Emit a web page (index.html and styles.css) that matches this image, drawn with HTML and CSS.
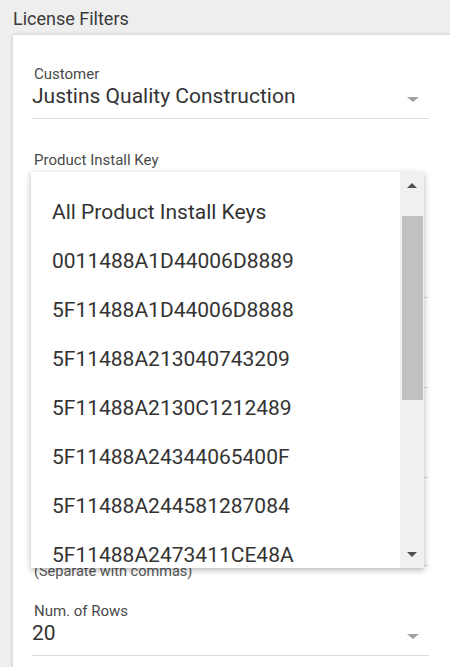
FILE: index.html
```html
<!DOCTYPE html>
<html>
<head>
<meta charset="utf-8">
<link rel="stylesheet" href="styles.css">
</head>
<body>
<div class="title">License Filters</div>
<div class="card">
  <div class="field first">
    <div class="label">Customer</div>
    <div class="value-row">
      <span class="value">Justins Quality Construction</span>
      <span class="caret"></span>
    </div>
  </div>

  <div class="field product">
    <div class="label">Product Install Key</div>
    <div class="value-row tall"></div>
  </div>

  <div class="field hidden-field">
    <div class="label"></div>
    <div class="value-row"><span class="value"></span></div>
  </div>

  <div class="field hidden-field">
    <div class="label"></div>
    <div class="value-row"><span class="value"></span></div>
  </div>

  <div class="field hidden-field last-hidden">
    <div class="label"></div>
    <div class="value-row"><span class="value"></span></div>
  </div>
  <div class="helper">(Separate with commas)</div>

  <div class="field rows">
    <div class="label">Num. of Rows</div>
    <div class="value-row">
      <span class="value">20</span>
      <span class="caret"></span>
    </div>
  </div>

  <div class="dropdown">
    <ul class="options">
      <li>All Product Install Keys</li>
      <li>0011488A1D44006D8889</li>
      <li>5F11488A1D44006D8888</li>
      <li>5F11488A213040743209</li>
      <li>5F11488A2130C1212489</li>
      <li>5F11488A24344065400F</li>
      <li>5F11488A244581287084</li>
      <li>5F11488A2473411CE48A</li>
    </ul>
    <div class="scrollbar">
      <div class="sb-btn up"><span class="tri-up"></span></div>
      <div class="sb-track"><div class="sb-thumb"></div></div>
      <div class="sb-btn down"><span class="tri-down"></span></div>
    </div>
  </div>
</div>
</body>
</html>
```

FILE: styles.css
```css
html, body {
  margin: 0;
  padding: 0;
  height: 100%;
  overflow: hidden;
}
body {
  background: #eeeeee;
  font-family: Roboto, "Liberation Sans", sans-serif;
  color: #333333;
}
.title {
  height: 35px;
  box-sizing: border-box;
  padding: 9px 0 0 13px;
  font-size: 18px;
  line-height: 20px;
  color: #3a3a3a;
}
.card {
  position: relative;
  margin-left: 13px;
  margin-right: -20px;
  background: #ffffff;
  box-shadow: 0 0 4px rgba(0,0,0,0.18);
  padding: 31px 41px 12px 19px;
}
.field {
  margin-top: 33px;
}
.field.first {
  margin-top: 0;
}
.label {
  font-size: 15px;
  line-height: 16px;
  height: 16px;
  padding-left: 2px;
  color: #4a4a4a;
}
.value-row {
  display: flex;
  align-items: center;
  margin-top: 2px;
  padding-bottom: 10px;
  border-bottom: 1px solid #dddddd;
  height: 24px;
}
.value-row.tall {
  height: 117px;
}
.value {
  flex: 1;
  font-size: 21px;
  line-height: 24px;
  color: #333;
}
.caret {
  width: 0;
  height: 0;
  border-left: 6px solid transparent;
  border-right: 6px solid transparent;
  border-top: 5px solid #a0a0a0;
  margin-right: 10px;
  margin-top: 7px;
}
.hidden-field {
  margin-top: 37px;
}
.hidden-field.last-hidden {
  margin-top: 35px;
}
.helper {
  font-size: 14.5px;
  line-height: 16px;
  padding-left: 2px;
  color: #555;
  margin-top: -2px;
}
.field.rows {
  margin-top: 23px;
}
.dropdown {
  position: absolute;
  top: 137px;
  left: 18px;
  width: 393px;
  height: 396px;
  background: #ffffff;
  box-shadow: 0 2px 6px rgba(0,0,0,0.3);
  display: flex;
  overflow: hidden;
}
.options {
  list-style: none;
  margin: 0;
  padding: 16px 0 0 0;
  flex: 1;
}
.options li {
  height: 49px;
  line-height: 49px;
  padding-left: 21px;
  font-size: 21px;
  color: #333;
  white-space: nowrap;
}
.scrollbar {
  width: 24px;
  background: #f0f0f0;
  display: flex;
  flex-direction: column;
}
.sb-btn {
  height: 28px;
  display: flex;
  justify-content: center;
  align-items: flex-start;
  box-sizing: border-box;
}
.sb-btn.up {
  padding-top: 11px;
}
.sb-btn.down {
  padding-top: 12px;
}
.tri-up {
  width: 0;
  height: 0;
  border-left: 5.5px solid transparent;
  border-right: 5.5px solid transparent;
  border-bottom: 5px solid #505050;
}
.tri-down {
  width: 0;
  height: 0;
  border-left: 5.5px solid transparent;
  border-right: 5.5px solid transparent;
  border-top: 5px solid #505050;
}
.sb-track {
  flex: 1;
  padding: 16px 1px 0 2px;
}
.sb-thumb {
  height: 184px;
  background: #c1c1c1;
}
```
